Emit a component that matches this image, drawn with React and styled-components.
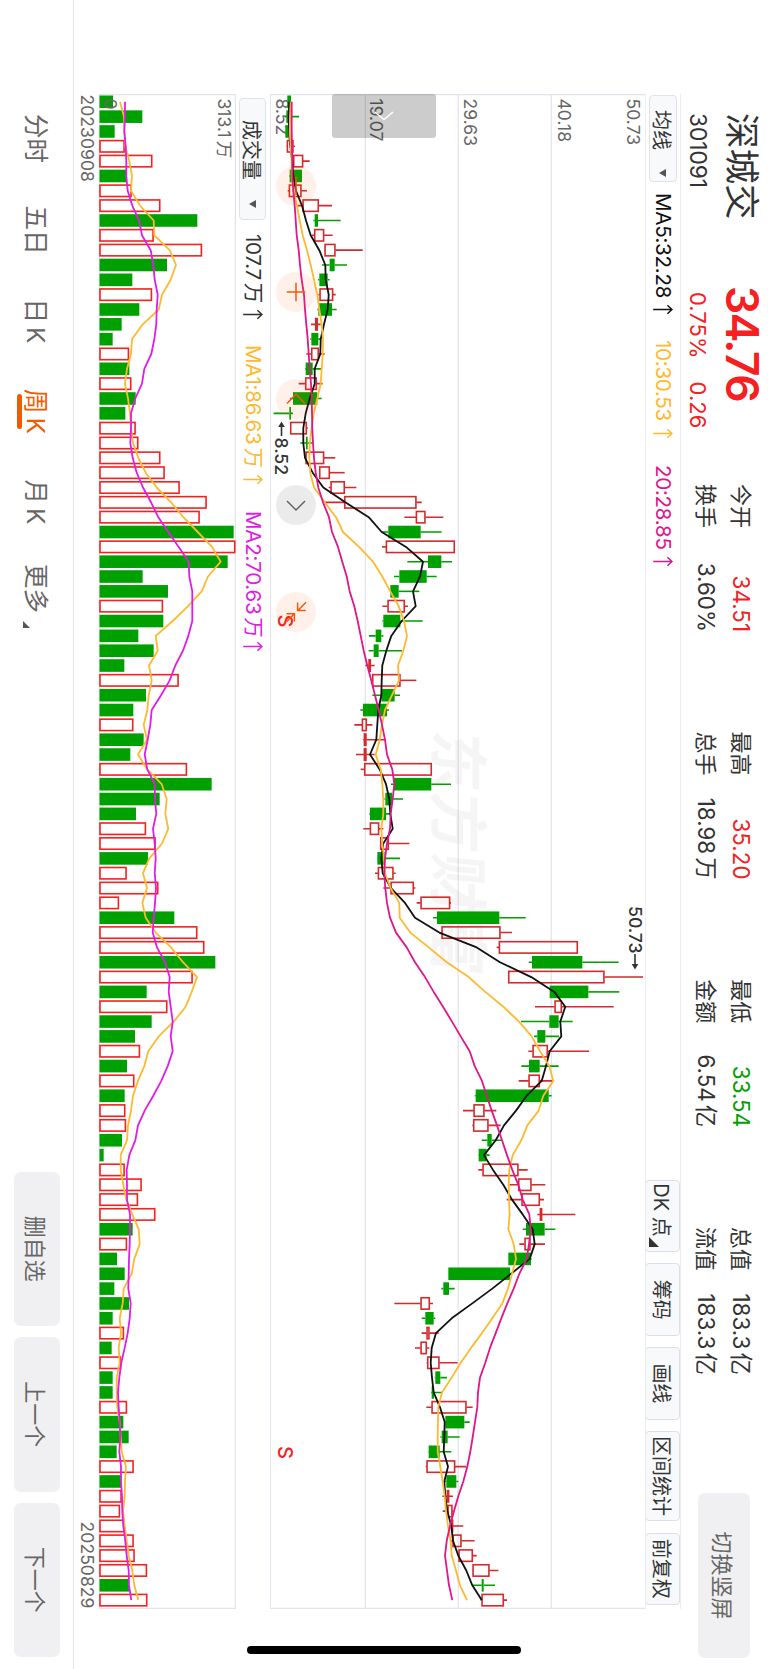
import React from "react";
import styled, { createGlobalStyle } from "styled-components";

const GlobalStyle = createGlobalStyle`
  body { margin: 0; background: #fff; }
  * { box-sizing: border-box; }
`

const UI = `Inter, "Noto Sans CJK SC", sans-serif`

// chart levels are stored in thirds of a pixel
const FIRST_X = 101.8
const STEP = 14.835
const xAt = (i) => FIRST_X + i * STEP
const priceY = (v) => 512 - v / 3
const volY = (v) => 708 - v / 3
const VOL_BASE = 668.5

// direction, low, body low, body high, high
const candles = `
g 94 94 105 105|g 88 91 103 129|g 86 88 98 98|r 92 93 112 117|r 106 112 141 161|g 99 101 138 138
r 95 99 136 153|r 126 140 188 228|g 172 176 186 254|r 168 175 204 230|r 205 206 238 320|g 198 221 236 273
g 186 190 215 221|r 187 191 231 239|g 184 187 228 242|r 165 178 185 194|g 163 166 187 193|r 151 166 188 206
g 147 149 170 197|r 128 148 182 200|g 102 111 184 197|g 53 100 105 111|r 103 103 152 155|g 133 150 155 168
r 149 149 204 238|r 190 190 221 266|r 218 224 266 301|r 207 265 481 497|r 445 480 508 562|g 378 397 494 557
r 378 390 596 596|g 454 516 556 588|g 414 430 512 542|g 403 403 428 490|r 379 395 446 456|g 379 382 433 500
g 339 359 376 382|g 338 353 368 438|r 328 338 344 356|r 349 349 433 481|g 349 376 416 432|g 313 321 393 399
r 295 318 332 349|r 322 324 331 390|r 300 324 331 356|r 314 325 527 527|g 405 414 526 585|g 385 388 408 441
g 340 342 390 402|r 322 342 369 382|r 372 373 398 460|g 363 364 386 432|r 357 366 412 419|r 382 404 473 478
r 482 494 582 585|g 531 543 730 809|r 555 557 733 768|r 722 729 965 965|g 818 828 979 1088|r 757 757 1045 1161
g 881 881 997 1090|r 837 896 917 1073|g 795 880 908 950|g 834 844 868 909|r 817 830 875 999|g 796 819 851 908
r 788 818 851 890|g 656 659 878 887|r 621 653 685 721|r 649 652 697 734|g 677 694 707 736|g 667 668 692 701
r 667 680 787 815|r 760 787 826 868|r 752 797 851 864|r 844 852 858 958|g 800 810 866 898|r 790 806 823 867
g 757 757 825 827|g 577 577 762 762|g 556 562 579 596|r 415 494 521 531|g 497 508 533 538|r 497 512 520 548
r 477 494 512 520|r 512 514 550 605|g 536 538 553 573|g 525 527 534 560|r 511 527 631 650|g 565 568 625 641
g 553 557 575 611|g 517 518 551 586|r 509 512 597 630|g 567 571 601 607|r 559 573 579 591|r 560 575 589 591
r 585 586 591 622|r 582 590 616 656|r 606 608 650 662|r 649 650 700 727|g 650 677 683 717|r 674 677 743 753
`.trim().split(/[|\n]/).map((row) => {
  const [dir, ...v] = row.split(" ")
  return [dir, ...v.map(Number)]
})

const volumes = `g159 g247 g164 r194 r277 g200 r215 r301 g412 r281 r426 g321 g217 r276 g238 g185 g158 r207 g208 r214 g227 g196
r227 r235 r301 r314 r359 r440 r419 g521 r526 g503 g248 g324 r309 g310 g235 g281 g193 r356 g258 g220 r220 g251 g211 r381
g455 g299 g228 r258 r287 g264 r200 r295 r177 g343 r412 r433 g466 r398 g260 r322 g275 g225 r240 g201 r223 g194 r196 r198
g186 g131 r194 r245 r234 r286 g218 r201 g171 g194 g163 g207 g158 r192 g155 r183 g158 g158 r201 g190 g206 g170 r221 g183
r185 r180 r194 r221 r224 r261 g207 r262`.split(/\s+/).map((s) => [s[0], Number(s.slice(1))])

const ma5 = [100,98,99,103,109,112,120,138,150,164,190,208,209,218,215,204,194,193,176,176,161,149,142,142,147,170,202,268,338,377,450,501,492,471,479,437,406,391,379,377,376,367,364,361,342,371,390,400,403,410,382,376,380,405,447,477,550,662,732,826,895,928,913,916,881,870,857,812,780,744,719,684,711,742,768,800,830,836,821,765,709,649,587,540,527,524,528,533,552,566,565,563,576,565,568,574,586,591,607,631,649,677]
const ma10 = [104,102,101,104,107,107,112,123,131,140,153,164,174,184,190,197,201,200,197,194,184,173,167,161,160,163,174,206,240,261,309,351,379,403,428,444,453,442,426,429,408,387,378,371,359,374,379,382,382,376,379,384,387,404,430,431,463,518,572,638,688,742,789,827,852,880,892,862,848,814,796,770,760,758,759,761,757,773,780,768,756,739,709,678,645,614,587,558,547,546,545,545,553,560,566,570,576,584,587,600,612,633]
const ma20 = [107,107,107,108,109,109,112,116,119,122,128,132,137,144,147,151,155,158,161,165,167,168,169,171,174,179,187,201,219,228,246,259,272,281,295,305,314,323,334,346,357,368,378,387,393,409,415,410,404,402,393,387,385,388,393,402,420,452,477,507,533,561,588,614,641,656,678,692,707,723,738,753,769,787,800,820,824,819,812,790,773,754,736,719,702,688,672,666,664,657,650,643,634,622,607,594,582,572,567,573,579,589]
const volMa1 = [180,192,193,196,208,216,213,240,281,283,329,348,332,306,296,248,216,213,201,195,204,210,213,219,235,257,290,333,370,413,456,482,444,425,384,338,287,293,267,275,266,262,251,261,234,262,305,320,316,325,306,268,249,261,247,257,287,333,369,411,395,377,341,296,265,253,234,219,213,204,201,182,182,190,199,217,236,239,223,215,191,188,179,183,176,179,170,170,172,179,182,185,198,195,194,189,194,200,206,217,223,235]
const volMa2 = [195,195,193,197,199,199,203,217,237,246,272,280,284,293,290,289,283,274,253,246,226,213,213,211,218,230,249,273,295,325,356,386,388,397,397,397,385,369,346,329,303,275,271,263,254,262,284,285,289,279,284,287,284,288,285,281,278,291,315,329,326,332,338,332,338,323,304,280,254,234,226,208,200,201,201,210,210,209,207,206,205,212,209,203,194,184,178,174,176,179,181,178,183,183,186,187,190,196,200,206,207,214]

const linePoints = (values, toY) => values.map((v, i) => `${xAt(i).toFixed(1)},${toY(v).toFixed(1)}`).join(" ")

const quotes = [
  [["今开", "34.51", "", "#f5201f"], ["换手", "3.60%"]],
  [["最高", "35.20", "", "#f5201f"], ["总手", "18.98", "万"]],
  [["最低", "33.54", "", "#00a000"], ["金额", "6.54", "亿"]],
  [["总值", "183.3", "亿"], ["流值", "183.3", "亿"]],
]

const tools = [["DK 点", 72.5, true], ["筹码", 72.5], ["画线", 72.5], ["区间统计", 90.5], ["前复权", 72.5]]

const tabs = [["分时", 50], ["五日", 51.5], ["日K", 49, 4], ["周K", 49, 4], ["月K", 43, 4], ["更多", 48]]

const UpArrow = () => (
  <ArrowSvg width="11" height="20" viewBox="0 0 11 20">
    <path d="M5.5 19.8V1.2M1.2 5.6L5.5 1L9.8 5.6" fill="none" stroke="currentColor" strokeWidth="1.5" />
  </ArrowSvg>
)

const Indicator = ({ color, width, text, children }) => (
  <IndicatorText $color={color} $width={width}>
    <IndicatorValue $width={text}>{children}</IndicatorValue>
    <UpArrow />
  </IndicatorText>
)

const PriceChart = () => (
  <svg width="1515" height="376" viewBox="94 122 1515 376">
    <g stroke="#e4e4ee" strokeWidth="1.3" fill="none">
      <path d="M94 402.7H1608M94 309.8H1608M94 216.7H1608" />
      <path d="M94.6 122V497.6H1608.4V122" />
      <path d="M94 122.2H1608.4" stroke="#ededf1" strokeWidth="1.4" />
    </g>
    <text x="0" y="0" transform="translate(729 332) skewX(-6)" fontFamily="Noto Sans CJK SC" fontWeight="700" fontSize="60" letterSpacing="1.2" fill="#000" fillOpacity="0.038">东方财富</text>
    <g fill="#666" fontFamily={UI} fontSize="17.6">
      <text x="98.5" y="141.1">50.73</text>
      <text x="98.5" y="210.3">40.18</text>
      <text x="98.5" y="304.3">29.63</text>
      <text x="98.5" y="398">19.07</text>
      <text x="98.5" y="491.6">8.52</text>
    </g>
    {candles.map(([dir, low, from, to, high], i) => {
      const x = xAt(i)
      const color = dir === "g" ? "#00a000" : "#d5292c"
      return (
        <g key={i} stroke={color} fill={dir === "g" ? color : "none"}>
          <path d={`M${x} ${priceY(low)}V${priceY(from)}M${x} ${priceY(to)}V${priceY(high)}`} strokeWidth="1.6" />
          {dir === "g"
            ? <rect x={x - 6.3} y={priceY(to)} width="12.6" height={(to - from) / 3} stroke="none" />
            : <rect x={x - 5.7} y={priceY(to) + 0.4} width="11.4" height={Math.max((to - from) / 3 - 0.8, 0.5)} strokeWidth="1.6" />}
        </g>
      )
    })}
    <g fill="none" strokeWidth="1.8" strokeLinejoin="round">
      <polyline points={linePoints(ma5, priceY)} stroke="#111" />
      <polyline points={linePoints(ma10, priceY)} stroke="#ffb92e" />
      <polyline points={linePoints(ma20, priceY)} stroke="#e0168a" />
    </g>
    <g fill="#333" fontFamily={UI} fontSize="17.6" fontWeight="500">
      <text x="437.5" y="492.8">8.52</text>
      <path d="M436 486.5H425" stroke="#333" strokeWidth="1.6" />
      <path d="M421.5 486.5L427 483.2V489.8Z" />
      <text x="906" y="139.2">50.73</text>
      <path d="M954 133H965" stroke="#333" strokeWidth="1.6" />
      <path d="M969.5 133L964 129.7V136.3Z" />
    </g>
    <g fill="#f5201f" fontFamily={UI} fontSize="20" fontWeight="500">
      <text x="614.5" y="490">S</text>
      <text x="1446" y="490">S</text>
    </g>
  </svg>
)

const VolumeChart = () => (
  <svg width="1515" height="162" viewBox="94 532 1515 162">
    <g stroke="#e4e4ea" strokeWidth="1.3" fill="none">
      <path d="M94.6 532V668.6H1608.4V532M94 532.6H1608.4" />
    </g>
    {volumes.map(([dir, v], i) => {
      const x = xAt(i)
      return dir === "g"
        ? <rect key={i} x={x - 6.3} y={volY(v)} width="12.6" height={VOL_BASE - volY(v)} fill="#00a000" />
        : <rect key={i} x={x - 5.7} y={volY(v) + 0.6} width="11.4" height={VOL_BASE - 1.1 - volY(v)} fill="none" stroke="#f5201f" strokeWidth="1.6" />
    })}
    <g fill="none" strokeWidth="1.8" strokeLinejoin="round">
      <polyline points={linePoints(volMa1, volY)} stroke="#ffb92e" />
      <polyline points={linePoints(volMa2, volY)} stroke="#e01de8" />
    </g>
    <g fill="#666" fontFamily={UI} fontSize="17.6">
      <text x="98.5" y="550">313.1<tspan dx="3">万</tspan></text>
      <text x="98.5" y="664.3">0</text>
      <text x="94.5" y="686.6">20230908</text>
      <text x="1608.5" y="686.6" textAnchor="end">20250829</text>
    </g>
  </svg>
)

const floatIcons = [
  [186, "M-9 0H9"],
  [292, "M-9.3 0H9.3M0 -9.3V9.3"],
  [399, "M4.5 -9L-5 0L4.5 9"],
  [505, "M-4 -9L5 0L-4 9", true],
  [612, "M-9.7 -10L-1.3 -1.7M-9.5 -1.6H-1.5V-9.7M9.7 9.4L1.7 1.7M9.5 1.6H1.7V9.5"],
]

const App = () => {
  return (
    <Screen>
      <GlobalStyle />
      <Landscape>
        <Header>
          <Stock>
            <Name>深城交</Name>
            <Code>301091</Code>
          </Stock>
          <Price>
            <Last>34.76</Last>
            <Change><span>0.75%</span><span>0.26</span></Change>
          </Price>
          <Quotes>
            {quotes.map((col, i) => (
              <QuoteColumn key={i}>
                {col.map(([label, value, unit, color]) => (
                  <Quote key={label}>
                    <span>{label}</span>
                    <QuoteValue $color={color}>{value}{unit && <Unit>{unit}</Unit>}</QuoteValue>
                  </Quote>
                ))}
              </QuoteColumn>
            ))}
          </Quotes>
          <SwitchBtn>切换竖屏</SwitchBtn>
        </Header>

        <MaBar>
          <Select $width={87} $height={28}>均线<Caret /></Select>
          <Indicators $left={11}>
            <Indicator color="#111" width={147} text={111}>MA5:32.28</Indicator>
            <Indicator color="#ffb92e" width={125} text={87.5}>10:30.53</Indicator>
            <Indicator color="#e0168a" width={110} text={91}>20:28.85</Indicator>
          </Indicators>
          <Tools>
            {tools.map(([label, width, corner]) => (
              <Tool key={label} $width={width} $corner={corner}>{label}{corner && <Corner $size={10} />}</Tool>
            ))}
          </Tools>
        </MaBar>

        <ChartArea>
          <PriceChart />
          <Handle>
            <svg width="10" height="20" viewBox="0 0 10 20"><path d="M1 1L8.5 10L1 19" fill="none" stroke="#fff" strokeWidth="1.5" /></svg>
          </Handle>
          {floatIcons.map(([x, d, gray]) => (
            <FloatBtn key={x} $x={x} $gray={gray}>
              <svg width="24" height="24" viewBox="-12 -12 24 24"><path d={d} fill="none" stroke="currentColor" strokeWidth="1.5" /></svg>
            </FloatBtn>
          ))}
        </ChartArea>

        <VolBar>
          <Select $width={122} $height={27} $wide>成交量<Caret /></Select>
          <Indicators $left={14}>
            <Indicator color="#333" width={111} text={75}>107.7<Unit>万</Unit></Indicator>
            <Indicator color="#ffb92e" width={166} text={128.5}>MA1:86.63<Unit>万</Unit></Indicator>
            <Indicator color="#e01de8" width={145} text={130}>MA2:70.63<Unit>万</Unit></Indicator>
          </Indicators>
        </VolBar>

        <ChartArea>
          <VolumeChart />
        </ChartArea>

        <Footer>
          <Tabs>
            {tabs.map(([label, width, spacing]) => (
              <Tab key={label} $width={width} $spacing={spacing} $active={label === "周K"}>
                {label}{label === "更多" && <MoreCorner $size={7} />}
              </Tab>
            ))}
          </Tabs>
          <Actions>
            <ActionBtn>删自选</ActionBtn>
            <ActionBtn>上一个</ActionBtn>
            <ActionBtn>下一个</ActionBtn>
          </Actions>
        </Footer>
        <HomeBar />
      </Landscape>
    </Screen>
  )
}

const Screen = styled.div`
  width: 768px;
  height: 1669px;
  overflow: hidden;
  background: #fff;
`

// the phone is held sideways, so the whole page is turned
const Landscape = styled.div`
  position: relative;
  display: flex;
  flex-direction: column;
  width: 1669px;
  height: 768px;
  transform-origin: 0 0;
  transform: translateX(768px) rotate(90deg);
  font-family: ${UI};
  color: #333;
  white-space: nowrap;
`

const Header = styled.div`
  display: flex;
  height: 87px;
  padding: 0 11px 0 113px;
`

const Stock = styled.div`
  display: flex;
  flex-direction: column;
  width: 174px;
`

const Name = styled.div`
  margin-top: 2px;
  height: 50px;
  font-size: 35.5px;
  line-height: 50px;
`

const Code = styled.div`
  margin-top: 6px;
  font-size: 22.6px;
  line-height: 24px;
`

const Price = styled.div`
  width: 197px;
  color: #f5201f;
`

const Last = styled.div`
  margin: 1px 0 0 -1px;
  height: 50px;
  font-size: 44.5px;
  font-weight: 600;
  letter-spacing: -1.6px;
  line-height: 51px;
`

const Change = styled.div`
  display: flex;
  gap: 23px;
  margin-top: 7px;
  padding-left: 5px;
  font-size: 22px;
  line-height: 24px;
`

const Quotes = styled.div`
  display: flex;
  gap: 99.6px;
`

const QuoteColumn = styled.div`
  display: flex;
  flex-direction: column;
  gap: 5px;
  width: 148px;
  padding-top: 12px;
`

const Quote = styled.div`
  display: flex;
  justify-content: space-between;
  font-size: 22px;
  line-height: 30px;
`

const QuoteValue = styled.span`
  color: ${(p) => p.$color || "#333"};
  font-size: 22.4px;
`

const Unit = styled.span`
  margin-left: 3px;
`

const SwitchBtn = styled.button`
  width: 165px;
  height: 52px;
  margin: 18px 0 0 auto;
  border: none;
  border-radius: 7px;
  background: #f0f0f2;
  color: #666;
  font: 22px ${UI};
`

const MaBar = styled.div`
  display: flex;
  align-items: center;
  width: 1515px;
  height: 35px;
  margin-left: 94px;
  padding-left: 1px;
  border-top: 1px solid #ededf1;
`

const VolBar = styled(MaBar)`
  height: 34px;
  padding-left: 4px;
  border-top: none;
`

const Select = styled.div`
  display: flex;
  align-items: center;
  justify-content: space-between;
  width: ${(p) => p.$width}px;
  height: ${(p) => p.$height}px;
  padding: ${(p) => (p.$wide ? "0 11px 0 21px" : "0 4px 0 14px")};
  border: 1px solid #e0e2ea;
  border-radius: 4px;
  background: #f7f9fb;
  font-size: 20px;
`

const Caret = styled.i`
  border-top: 7px solid #555;
  border-left: 4px solid transparent;
  border-right: 4px solid transparent;
`

const Indicators = styled.div`
  display: flex;
  margin-left: ${(p) => p.$left}px;
`

const IndicatorText = styled.div`
  display: flex;
  align-items: center;
  width: ${(p) => p.$width}px;
  color: ${(p) => p.$color};
  font-size: 20.6px;
  letter-spacing: -0.3px;
  line-height: 26px;
`

const IndicatorValue = styled.span`
  width: ${(p) => p.$width}px;
`

const ArrowSvg = styled.svg`
  flex: none;
`

const Tools = styled.div`
  display: flex;
  gap: 11.2px;
  margin: 0 4px 0 auto;
`

const Tool = styled.div`
  position: relative;
  display: flex;
  align-items: center;
  justify-content: center;
  width: ${(p) => p.$width}px;
  height: 35px;
  padding-right: ${(p) => (p.$corner ? 12 : 0)}px;
  border: 1px solid #dddfe6;
  border-radius: 4px;
  background: #f7f9fb;
  font-size: 20px;
`

const Corner = styled.i`
  position: absolute;
  right: 4px;
  bottom: 3px;
  border-bottom: ${(p) => p.$size}px solid #333;
  border-left: ${(p) => p.$size}px solid transparent;
`

const ChartArea = styled.div`
  position: relative;
  width: 1515px;
  margin-left: 94px;
  svg { display: block; }
`

const Handle = styled.div`
  position: absolute;
  top: 210px;
  left: 0;
  display: flex;
  align-items: center;
  justify-content: center;
  width: 44px;
  height: 104px;
  border-radius: 3px;
  background: rgba(0, 0, 0, 0.2);
`

const FloatBtn = styled.div`
  position: absolute;
  top: 330px;
  left: ${(p) => p.$x - 114}px;
  display: flex;
  align-items: center;
  justify-content: center;
  width: 40px;
  height: 40px;
  border-radius: 50%;
  background: ${(p) => (p.$gray ? "rgba(0, 0, 0, 0.08)" : "rgba(255, 90, 10, 0.09)")};
  color: ${(p) => (p.$gray ? "#666" : "#f05a0a")};
`

const Footer = styled.div`
  display: flex;
  justify-content: space-between;
  height: 74px;
  padding: 0 12px 0 114px;
  border-top: 1px solid #e6e6e6;
`

const Tabs = styled.div`
  display: flex;
  align-items: center;
  gap: 41.5px;
`

const Tab = styled.div`
  position: relative;
  width: ${(p) => p.$width}px;
  color: ${(p) => (p.$active ? "#f05a00" : "#666")};
  font-size: 24.5px;
  letter-spacing: ${(p) => p.$spacing || 0}px;
  line-height: 36px;
  &::after {
    content: "";
    position: absolute;
    display: ${(p) => (p.$active ? "block" : "none")};
    left: 5px;
    bottom: -1px;
    width: 35px;
    height: 5px;
    border-radius: 3px;
    background: #f05a00;
  }
`

const MoreCorner = styled(Corner)`
  right: -16px;
  bottom: 5px;
  border-bottom-color: #555;
`

const Actions = styled.div`
  display: flex;
  gap: 11px;
  padding-top: 13px;
`

const ActionBtn = styled.button`
  width: 154.5px;
  height: 46px;
  border: none;
  border-radius: 7px;
  background: #f0f0f2;
  color: #666;
  font: 22px ${UI};
`

const HomeBar = styled.div`
  position: absolute;
  left: 1646px;
  top: 247px;
  width: 8px;
  height: 274px;
  border-radius: 4px;
  background: #000;
`

export default App;
